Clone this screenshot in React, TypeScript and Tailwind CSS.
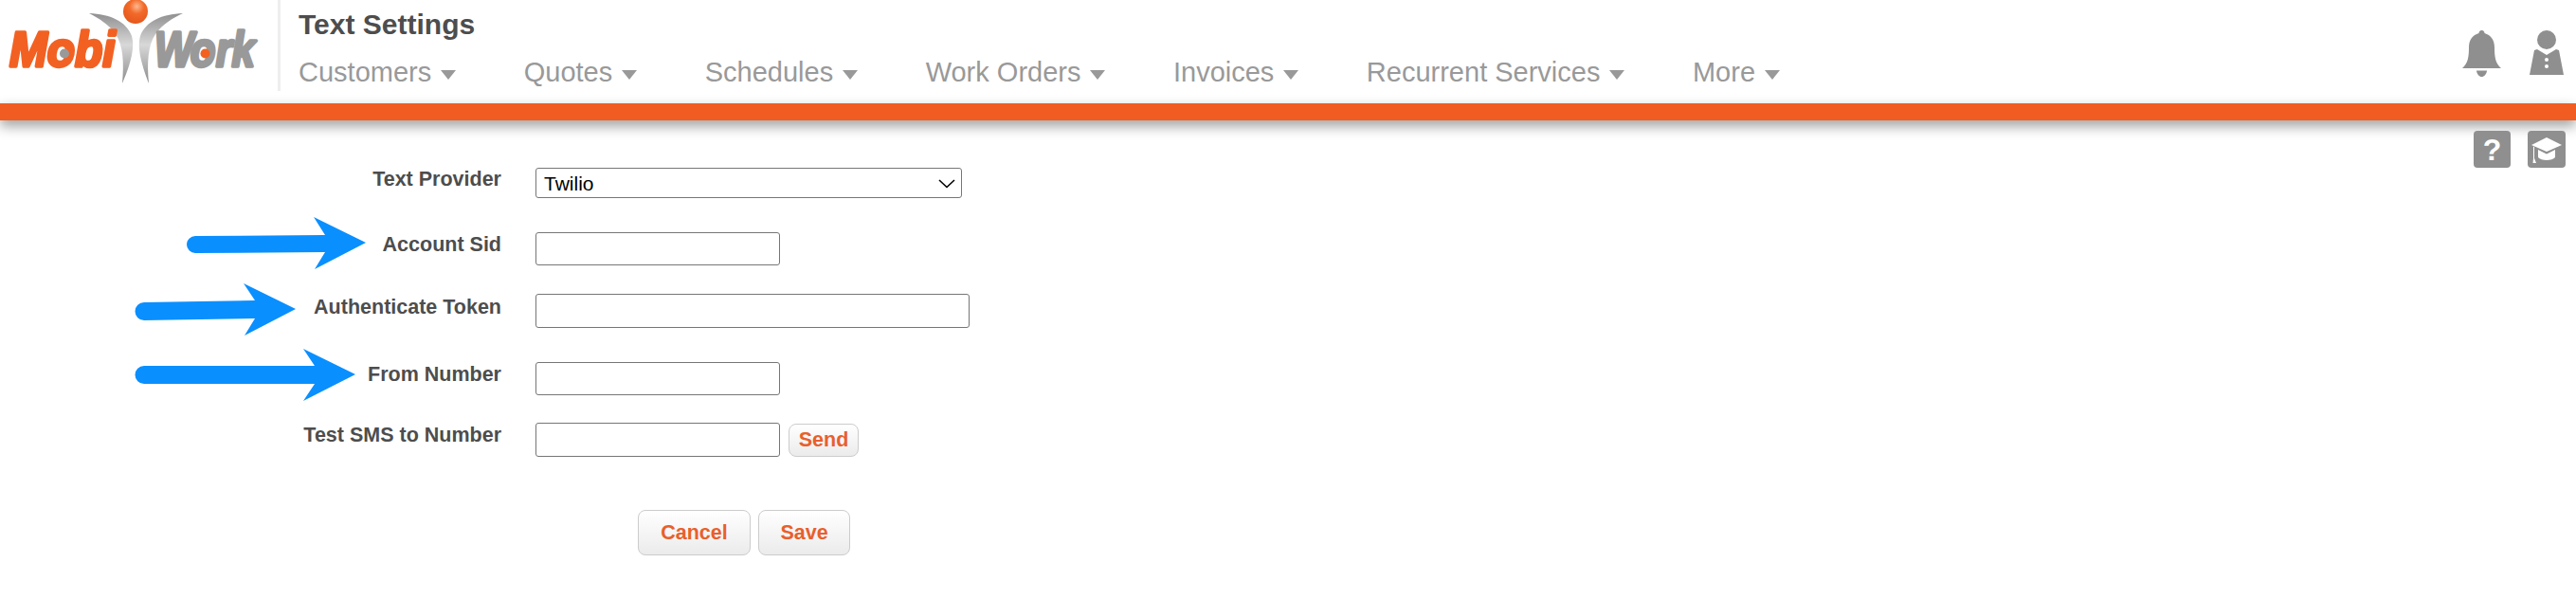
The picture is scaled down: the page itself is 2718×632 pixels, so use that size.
import React from 'react'

const navItems = ['Customers', 'Quotes', 'Schedules', 'Work Orders', 'Invoices', 'Recurrent Services', 'More']

const Logo: React.FC = () => (
  <svg width="290" height="96" viewBox="0 0 290 96" className="block">
    <defs>
      <radialGradient id="ball" cx="0.55" cy="0.3" r="0.75">
        <stop offset="0" stopColor="#ffb78f" />
        <stop offset="0.4" stopColor="#f26a2a" />
        <stop offset="1" stopColor="#e4551a" />
      </radialGradient>
      <linearGradient id="swoosh" x1="0" y1="0" x2="0" y2="1">
        <stop offset="0" stopColor="#8f8f8f" />
        <stop offset="0.45" stopColor="#d8d8d8" />
        <stop offset="1" stopColor="#8c8c8c" />
      </linearGradient>
    </defs>
    <path d="M94 14 C116 15 133 22 139 38 C143 52 136 72 129 88 C131 66 130 48 122 36 C115 26 104 19 94 14 Z" fill="url(#swoosh)" />
    <path d="M193 14 C171 15 154 22 148 38 C144 52 151 72 157 88 C155 66 156 48 164 36 C171 26 182 19 193 14 Z" fill="url(#swoosh)" />
    <circle cx="143" cy="12" r="13" fill="url(#ball)" />
    <g transform="translate(10 69.5) scale(0.92 1)">
      <text x="0" y="0" fontFamily="'Liberation Sans', sans-serif" fontWeight="700" fontStyle="italic" fontSize="52" fill="#f26122" stroke="#f26122" strokeWidth="3.5" strokeLinejoin="round">Mobi</text>
    </g>
    <circle cx="68" cy="56.5" r="5" fill="#999" />
    <g transform="translate(163 69.5) scale(0.84 1)">
      <text x="0 45 77 97" y="0" fontFamily="'Liberation Sans', sans-serif" fontWeight="700" fontStyle="italic" fontSize="52" fill="#999" stroke="#999" strokeWidth="3.5" strokeLinejoin="round">Work</text>
    </g>
    <circle cx="216.5" cy="56.5" r="5" fill="#f26122" />
  </svg>
)

const Bell: React.FC = () => (
  <svg width="41" height="49" viewBox="0 0 41 49" className="block">
    <path d="M20.5 0 C22.5 0 23.5 1.5 23.5 3 C30 5 34 10 34 18 C34 28 35 35 41 40 L0 40 C6 35 7 28 7 18 C7 10 11 5 17.5 3 C17.5 1.5 18.5 0 20.5 0 Z" fill="#8f8f8f" />
    <path d="M15 42.5 L26 42.5 C25.5 46.5 23 49 20.5 49 C18 49 15.5 46.5 15 42.5 Z" fill="#8f8f8f" />
  </svg>
)

const Person: React.FC = () => (
  <svg width="36" height="47" viewBox="0 0 36 47" className="block">
    <circle cx="18" cy="10" r="10" fill="#8f8f8f" />
    <path d="M8 20 L18 26 L28 20 L31 21 L36 47 L0 47 L5 21 Z" fill="#8f8f8f" />
    <circle cx="18" cy="31" r="2" fill="#fff" />
    <circle cx="18" cy="38" r="2" fill="#fff" />
  </svg>
)

const Cap: React.FC = () => (
  <svg width="32" height="30" viewBox="0 0 32 30" className="block">
    <path d="M16 2 L32 10 L16 17 L0 10 Z" fill="#fff" />
    <path d="M7 15 L16 19.5 L25 15 L25 23 C22 27 10 27 7 23 Z" fill="#fff" />
    <path d="M3 12 L3 24 L5 29 L1.5 29 L2 24 L2 11.5 Z" fill="#fff" />
  </svg>
)

const Arrows: React.FC = () => (
  <svg width="400" height="440" viewBox="0 0 400 440" className="absolute left-0 top-0">
    <path d="M206 249 L343 248 L331 229 L386 256 L332 284 L343 266 L206 267 A9 9 0 0 1 206 249 Z" fill="#0a8fff" />
    <path d="M152 319 L269 317 L257 299 L312 326 L258 354 L269 336 L152 338 A9.5 9.5 0 0 1 152 319 Z" fill="#0a8fff" />
    <path d="M152 386 L332 386 L320 368 L375 395 L320 423 L332 405 L152 405 A9.5 9.5 0 0 1 152 386 Z" fill="#0a8fff" />
  </svg>
)

const labelClass = 'w-[529px] text-right text-[21.5px] leading-none font-bold text-[#4d4d4d]'
const inputClass = 'ml-[36px] rounded-[3px] border border-[#767676] bg-white'
const buttonClass =
  'rounded-[8px] border border-[#cccccc] bg-gradient-to-b from-white to-[#ebebeb] text-[21.5px] font-bold text-[#e8602c]'

const App: React.FC = () => {
  return (
    <div className="relative min-h-[632px] bg-white font-['Liberation_Sans',sans-serif]">
      <header className="flex h-[109px] items-start">
        <div className="w-[293px]">
          <Logo />
        </div>
        <div className="h-[96px] w-[3px] bg-[#eeeeee]" />
        <div className="pl-[19px]">
          <h1 className="pt-[11px] text-[30px] leading-[30px] font-bold text-[#4d4d4d]">Text Settings</h1>
          <nav className="mt-[21px] flex gap-[71.5px]">
            {navItems.map((item) => (
              <div key={item} className="flex items-center gap-[10px] text-[29px] leading-[29px] text-[#999999]">
                {item}
                <span className="mt-[4px] h-0 w-0 border-x-[8.5px] border-t-[10px] border-x-transparent border-t-[#999999]" />
              </div>
            ))}
          </nav>
        </div>
        <div className="ml-auto flex items-start gap-[30px] pt-[32px] pr-[13px]">
          <Bell />
          <Person />
        </div>
      </header>

      <div className="h-[18px] bg-[#f15c22] shadow-[0_6px_14px_rgba(0,0,0,0.38)]" />

      <div className="flex justify-end gap-[18px] pt-[11px] pr-[11px]">
        <div className="flex h-[39px] w-[39px] items-center justify-center rounded-[4px] bg-[#8f8f8f] text-[32px] leading-none font-bold text-white">?</div>
        <div className="flex h-[39px] w-[40px] items-center justify-center rounded-[4px] bg-[#8f8f8f]">
          <Cap />
        </div>
      </div>

      <form>
        <div className="flex items-center">
          <label className={`${labelClass} pb-[7px]`}>Text Provider</label>
          <div className="relative ml-[36px]">
            <select defaultValue="Twilio" className="block h-[32px] w-[450px] appearance-none rounded-[3px] border border-[#767676] bg-white pl-[8px] text-[21px] text-black">
              <option>Twilio</option>
            </select>
            <svg width="18" height="10" viewBox="0 0 18 10" fill="none" className="absolute top-[12px] right-[7px]">
              <path d="M1 1 L9 8.5 L17 1" stroke="#000" strokeWidth="1.6" />
            </svg>
          </div>
        </div>
        <div className="mt-[36px] flex items-center">
          <label className={`${labelClass} pb-[7px]`}>Account Sid</label>
          <input className={`${inputClass} h-[35px] w-[258px]`} />
        </div>
        <div className="mt-[30px] flex items-center">
          <label className={`${labelClass} pb-[7px]`}>Authenticate Token</label>
          <input className={`${inputClass} h-[36px] w-[458px]`} />
        </div>
        <div className="mt-[36px] flex items-center">
          <label className={`${labelClass} pb-[7px]`}>From Number</label>
          <input className={`${inputClass} h-[35px] w-[258px]`} />
        </div>
        <div className="mt-[29px] flex items-center">
          <label className={`${labelClass} pb-[9px]`}>Test SMS to Number</label>
          <input className={`${inputClass} h-[36px] w-[258px]`} />
          <button type="button" className={`${buttonClass} ml-[9px] h-[35px] w-[74px]`}>Send</button>
        </div>
        <div className="mt-[56px] flex gap-[8px] pl-[673px]">
          <button type="button" className={`${buttonClass} h-[48px] w-[119px]`}>Cancel</button>
          <button type="button" className={`${buttonClass} h-[48px] w-[97px]`}>Save</button>
        </div>
      </form>

      <Arrows />
    </div>
  )
}

export default App
